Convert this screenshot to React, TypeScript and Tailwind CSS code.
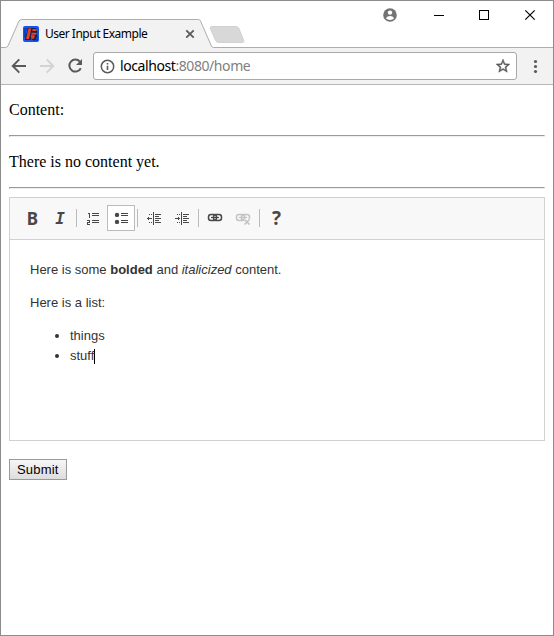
import React from 'react';

function TabStrip() {
  return (
    <div className="relative h-[47px] shrink-0">
      <svg className="absolute left-0 top-0" width="552" height="47" viewBox="1 1 552 47" fill="none">
        <path d="M1 47.5H5.5Q7.2 47.5 8 45.8L19 21Q19.8 19.5 21.5 19.5H198.5Q199.9 19.5 200.5 21L211.3 45.8Q212 47.5 213.5 47.5H553V49H1Z" fill="#f2f2f2" />
        <path d="M1 47.5H5.5Q7.2 47.5 8 45.8L19 21Q19.8 19.5 21.5 19.5H198.5Q199.9 19.5 200.5 21L211.3 45.8Q212 47.5 213.5 47.5H553" stroke="#adadad" />
        <path d="M211.5 26.5H236Q238 26.5 238.8 28.3L243.8 40.5Q244.3 42.5 242.5 42.5H218.5Q216.5 42.5 215.7 40.7L210.3 28.5Q209.6 26.5 211.5 26.5Z" fill="#d8d8d8" stroke="#cacaca" strokeWidth="0.8" />
        <path d="M186.3 30.3L193.7 37.7M193.7 30.3L186.3 37.7" stroke="#5a5a5a" strokeWidth="1.8" />
        <circle cx="390" cy="15" r="6.8" fill="#737373" />
        <circle cx="390" cy="12.6" r="2.2" fill="#fff" />
        <path d="M385.8 18.2Q387.3 16 390 16T394.2 18.2Q392.6 20 390 20T385.8 18.2Z" fill="#fff" />
        <path d="M434 15.5H444M479.5 10.5H488.5V19.5H479.5Z" stroke="#000" shapeRendering="crispEdges" />
        <path d="M525.3 10.3L534.7 19.7M534.7 10.3L525.3 19.7" stroke="#000" strokeWidth="1.2" />
        <rect x="23" y="26" width="16" height="16" rx="2" fill="#1555ed" />
        <path d="M24 28h5v2h-3v7h-2zM35 36h3v5h-5v-2h2z" fill="#0840c7" />
        <path d="M28 28h8v1h1v4h-1v1h1v3h-1v3h-4v-4h-1v4h-6v-2l2-6z" fill="#142449" />
        <path d="M28.5 28.5h2.8l-2.3 10.5h-3zM32.5 29h4v2h-4.200zM31.500 32.700h4.500v2h-4.700zM31 35.300h3.800l-.7 3.500h-2.200l.3-1.500h-1.400z" fill="#f23d25" />
      </svg>
      <div className="relative pl-[44px] pt-[24px] font-['Noto_Sans','Open_Sans',sans-serif] text-[12px] leading-[18px] tracking-[-0.5px] text-black">User Input Example</div>
    </div>
  );
}

function AddressBar() {
  return (
    <div className="flex h-[37px] shrink-0 border-b border-[#b6b6b6] bg-[#f2f2f2] pt-[4px]">
      <svg className="shrink-0" width="92" height="28" viewBox="1 52 92 28" fill="none">
        <path d="M26 66H13M19.3 59.4L12.7 66L19.3 72.6" stroke="#5a5a5a" strokeWidth="1.9" />
        <path d="M40 66H53M46.7 59.4L53.3 66L46.7 72.6" stroke="#d3d3d3" strokeWidth="1.9" />
        <path d="M79.9 61.6A6 6 0 1 0 80.8 68.2" stroke="#5a5a5a" strokeWidth="2" />
        <path d="M82 59V65H76Z" fill="#5a5a5a" />
      </svg>
      <div className="flex h-[28px] w-[424px] items-center rounded-[3px] border border-[#a8a8a8] bg-white pl-[6px] pr-[6px]">
        <svg className="-ml-[0.5px] shrink-0" width="15" height="15" viewBox="0 0 15 15" fill="none">
          <circle cx="7.5" cy="7.5" r="6.2" stroke="#5a5a5a" strokeWidth="1.5" />
          <path d="M6.7 4h1.6v1.5H6.7zM6.7 6.7h1.6v4.3H6.7z" fill="#5a5a5a" />
        </svg>
        <span className="ml-[5.5px] font-['Noto_Sans','Open_Sans',sans-serif] text-[14px] leading-[20px] tracking-[-0.42px] text-black">localhost<span className="text-[#808080]">:8080/home</span></span>
        <svg className="ml-auto shrink-0" width="14" height="14" viewBox="2 2 20 20" fill="#5a5a5a" stroke="#5a5a5a" strokeWidth="0.6">
          <path d="M22 9.24l-7.19-.62L12 2 9.19 8.63 2 9.24l5.46 4.73L5.82 21 12 17.27 18.18 21l-1.63-7.03L22 9.24zM12 15.4l-3.76 2.27 1-4.28-3.32-2.88 4.38-.38L12 6.1l1.71 4.04 4.38.38-3.32 2.88 1 4.28L12 15.4z" />
        </svg>
      </div>
      <svg className="ml-[15px]" width="6" height="28" viewBox="532 52 6 28" fill="#5a5a5a">
        <circle cx="535.5" cy="61.5" r="1.6" /><circle cx="535.5" cy="66.5" r="1.6" /><circle cx="535.5" cy="71.5" r="1.6" />
      </svg>
    </div>
  );
}

function Rule() {
  return <div className="h-[2px] border border-[#9a9a9a] border-b-[#eeeeee] border-r-[#eeeeee]" />;
}

function Separator() {
  return <div className="mt-[11px] h-[18px] w-px shrink-0 bg-[#bcbcbc]" />;
}

const tool = 'flex h-[26px] w-[28px] shrink-0 items-center justify-center';

function IndentIcon({ reverse = false }: { reverse?: boolean }) {
  return (
    <svg width="16" height="16" viewBox="0 0 16 16" fill="#484848" shapeRendering="crispEdges">
      <path d="M7 2h1v13H7zM9 4h6v1H9zM9 6h4v1H9zM9 8h6v1H9zM9 10h4v1H9zM9 12h6v1H9zM3 4h1v1H3zM5 4h1v1H5zM3 12h1v1H3zM5 12h1v1H5z" />
      <path d={reverse ? 'M1 8h5v1H1zM2 7h1v3H2z' : 'M1 8h5v1H1zM4 7h1v3H4z'} />
    </svg>
  );
}

function LinkIcon({ broken = false }: { broken?: boolean }) {
  return (
    <svg width="16" height="16" viewBox="0 0 16 16" fill="none" stroke={broken ? '#c3c3c3' : '#484848'}>
      <rect x="1.5" y="4.5" width="8" height="6" rx="2.5" strokeWidth="1.5" />
      <rect x="6.5" y="4.5" width="8" height="6" rx="2.5" strokeWidth="1.5" />
      <path d="M4 7.5h8" strokeWidth="1.2" />
      {broken && <><path d="M9 9h6v6H9z" fill="#f8f8f8" stroke="none" /><path d="M9.5 9.5l5 5M14.5 9.5l-5 5" strokeWidth="1.7" /></>}
    </svg>
  );
}

function EditorToolbar() {
  return (
    <div className="flex h-[42px] shrink-0 border-b border-[#d1d1d1] bg-[#f8f8f8] pl-[8px] text-[#484848]">
      <div className="flex pt-[7px]">
        <div className={tool}><span className="pl-px font-['Noto_Sans',sans-serif] text-[17px] font-bold leading-none">B</span></div>
        <div className={tool}><span className="pt-px font-['DejaVu_Sans_Mono',monospace] text-[16px] font-bold italic leading-none">I</span></div>
      </div>
      <div className="w-[2px]" />
      <Separator />
      <div className="flex pl-[2px] pt-[7px]">
        <div className={tool}>
          <svg width="16" height="16" viewBox="0 0 16 16" fill="#484848" shapeRendering="crispEdges">
            <path d="M3 3h2v5H4V4H3zM7 3h7v1H7zM7 5h7v1H7zM7 10h7v1H7zM7 12h7v1H7zM2 10h3v3H3v1h2v1H2v-3h2v-1H2z" />
          </svg>
        </div>
        <div className="flex h-[26px] w-[28px] items-center justify-center border border-[#bcbcbc] bg-white">
          <svg width="16" height="16" viewBox="0 0 16 16" fill="#484848">
            <circle cx="4" cy="4.9" r="2.2" /><circle cx="4" cy="11.9" r="2.2" />
            <path d="M8 3h7v1H8zM8 5h7v1H8zM8 10h7v1H8zM8 12h7v1H8z" />
          </svg>
        </div>
      </div>
      <div className="w-[2px]" />
      <Separator />
      <div className="flex pl-[2px] pt-[7px]">
        <div className={tool}><IndentIcon reverse /></div>
        <div className={tool}><IndentIcon /></div>
      </div>
      <div className="w-[2px]" />
      <Separator />
      <div className="flex pl-[2px] pt-[7px]">
        <div className={tool}><LinkIcon /></div>
        <div className={tool}><LinkIcon broken /></div>
      </div>
      <div className="w-[2px]" />
      <Separator />
      <div className="flex pl-[2px] pt-[7px]">
        <div className={tool}><span className="pl-px font-['Open_Sans',sans-serif] text-[19px] font-bold leading-none">?</span></div>
      </div>
    </div>
  );
}

export default function App() {
  return (
    <div className="flex h-[636px] w-[554px] flex-col overflow-hidden border border-[#8c8c8c] bg-white">
      <TabStrip />
      <AddressBar />
      <main className="px-[8px] pt-[16px] font-['Liberation_Serif',serif] text-[16px] leading-[18px] text-black">
        <p className="mb-[16px]">Content:</p>
        <Rule />
        <p className="my-[16px]">There is no content yet.</p>
        <Rule />
        <div className="mt-[8px] flex h-[244px] flex-col border border-[#d1d1d1]">
          <EditorToolbar />
          <div className="px-[20px] pt-[20px] font-['Liberation_Sans',sans-serif] text-[13px] leading-[20px] text-[#333333]">
            <p className="mb-[13px]">Here is some <strong>bolded</strong> and <em>italicized</em> content.</p>
            <p className="mb-[13px]">Here is a list:</p>
            <ul className="list-disc pl-[40px]">
              <li>things</li>
              <li><span className="inline-flex items-center">stuff<span className="h-[15px] w-px bg-black" /></span></li>
            </ul>
          </div>
        </div>
        <button className="mt-[18px] block h-[21px] w-[58px] whitespace-nowrap border border-[#999999] bg-linear-to-b from-[#f6f6f6] to-[#dddddd] pl-[7px] text-left font-['Liberation_Sans',sans-serif] text-[13px] leading-[19px] tracking-[0.2px] text-black">Submit</button>
      </main>
    </div>
  );
}
